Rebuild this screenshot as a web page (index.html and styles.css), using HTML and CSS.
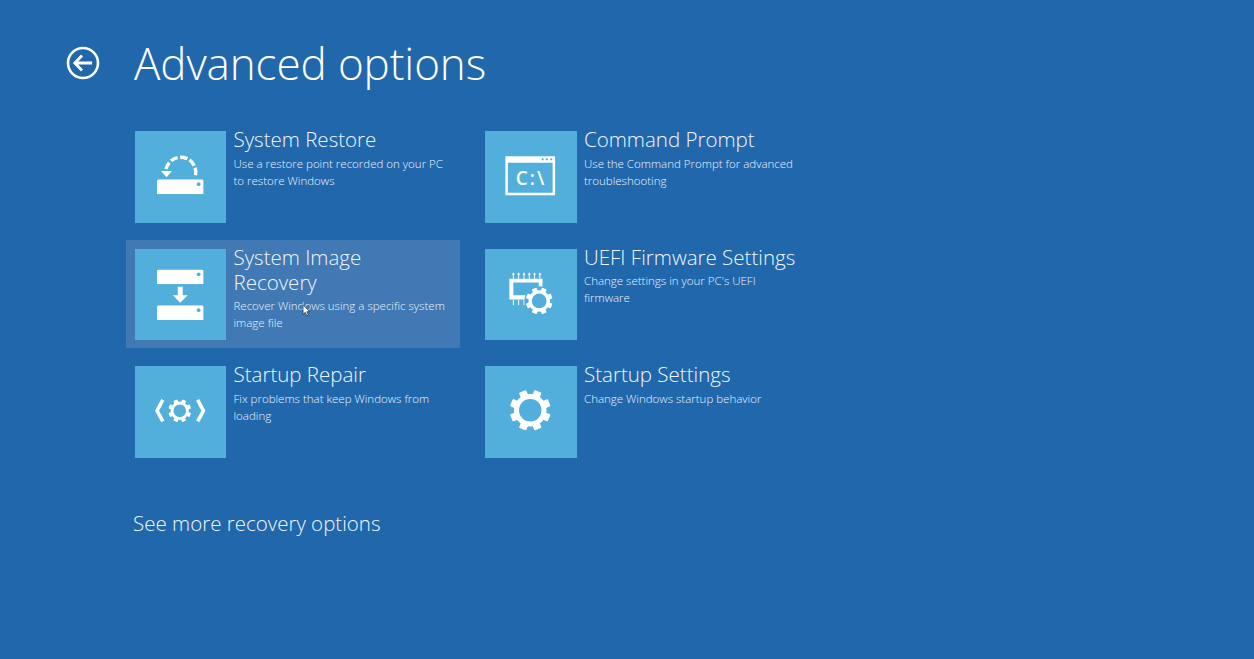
FILE: index.html
```html
<!DOCTYPE html>
<html lang="en">
<head>
  <meta charset="UTF-8"/>
  <title>Advanced options</title>
  <link rel="stylesheet" href="styles.css">
</head>
<body>

<svg class="defs" aria-hidden="true">
  <symbol id="gear" viewBox="-20 -20 40 40">
    <circle r="13.5" fill="none" stroke="#fff" stroke-width="5"/>
    <g fill="#fff">
      <rect x="-3.8" y="-20" width="7.6" height="7" rx="1" transform="rotate(22.5)"/>
      <rect x="-3.8" y="-20" width="7.6" height="7" rx="1" transform="rotate(67.5)"/>
      <rect x="-3.8" y="-20" width="7.6" height="7" rx="1" transform="rotate(112.5)"/>
      <rect x="-3.8" y="-20" width="7.6" height="7" rx="1" transform="rotate(157.5)"/>
      <rect x="-3.8" y="-20" width="7.6" height="7" rx="1" transform="rotate(202.5)"/>
      <rect x="-3.8" y="-20" width="7.6" height="7" rx="1" transform="rotate(247.5)"/>
      <rect x="-3.8" y="-20" width="7.6" height="7" rx="1" transform="rotate(292.5)"/>
      <rect x="-3.8" y="-20" width="7.6" height="7" rx="1" transform="rotate(337.5)"/>
    </g>
  </symbol>
  <symbol id="drive" viewBox="0 0 47 15">
    <path d="M0 15V2a2 2 0 0 1 2-2h43a2 2 0 0 1 2 2v13z" fill="#fff"/>
    <circle cx="42" cy="5" r="1.9" fill="#52aedb"/>
  </symbol>
</svg>

<div class="page">
  <header class="top">
    <svg class="back-icon" viewBox="0 0 34 34" aria-hidden="true">
      <circle cx="17" cy="17" r="15" fill="none" stroke="#fff" stroke-width="2.6"/>
      <path d="M26 17H9M16 9.500L8.800 17l7.200 7.500" fill="none" stroke="#fff" stroke-width="2.800"/>
    </svg>
    <h1>Advanced options</h1>
  </header>

  <div class="options">
    <div class="option">
      <div class="tile">
        <svg viewBox="0 0 92 92" aria-hidden="true">
          <path d="M60.850 44.500A15 15 0 1 0 31.200 38.500" fill="none" stroke="#fff" stroke-width="3.400" stroke-dasharray="7.500 2.400"/>
          <path d="M26.200 40.200h11l-5.500 6.300z" fill="#fff"/>
          <use href="#drive" x="22" y="48.500" width="47" height="15"/>
        </svg>
      </div>
      <div class="text">
        <div class="name">System Restore</div>
        <div class="desc">Use a restore point recorded on your PC to restore Windows</div>
      </div>
    </div>

    <div class="option is-hover">
      <div class="tile">
        <svg viewBox="0 0 92 92" aria-hidden="true">
          <use href="#drive" x="22" y="20.500" width="47" height="15"/>
          <path d="M43 38h5v8.500h5l-7.500 7.500-7.500-7.500h5z" fill="#fff"/>
          <use href="#drive" x="22" y="56.500" width="47" height="15"/>
        </svg>
      </div>
      <div class="text">
        <div class="name">System Image Recovery</div>
        <div class="desc">Recover Windows using a specific system image file</div>
      </div>
      <svg class="pointer" viewBox="0 0 10 15" aria-hidden="true">
        <path d="M1 1v11l2.600-2.400 1.800 4 1.800-.8-1.800-3.900h3.400z" fill="#fff" stroke="#222" stroke-width=".8"/>
      </svg>
    </div>

    <div class="option">
      <div class="tile">
        <svg viewBox="0 0 92 92" aria-hidden="true">
          <path d="M28 34L22.200 45 28 55.700" fill="none" stroke="#fff" stroke-width="3.600"/>
          <path d="M63 34L68.800 45 63 55.700" fill="none" stroke="#fff" stroke-width="3.600"/>
          <use href="#gear" x="33.500" y="33.500" width="23" height="23"/>
        </svg>
      </div>
      <div class="text">
        <div class="name">Startup Repair</div>
        <div class="desc">Fix problems that keep Windows from loading</div>
      </div>
    </div>

    <div class="option">
      <div class="tile">
        <svg viewBox="0 0 92 92" aria-hidden="true">
          <path d="M20.500 25.300h50v39.400h-50z M23 32v30.200h45V32z" fill="#fff" fill-rule="evenodd"/>
          <circle cx="58" cy="28.500" r="1.100" fill="#52aedb"/>
          <circle cx="62.300" cy="28.500" r="1.100" fill="#52aedb"/>
          <circle cx="66.600" cy="28.500" r="1.100" fill="#52aedb"/>
          <text class="prompt" x="31" y="54">C:\</text>
        </svg>
      </div>
      <div class="text">
        <div class="name">Command Prompt</div>
        <div class="desc">Use the Command Prompt for advanced troubleshooting</div>
      </div>
    </div>

    <div class="option">
      <div class="tile">
        <svg viewBox="0 0 92 92" aria-hidden="true">
          <path d="M24.500 29.800h33.300v21H24.500z M28.500 33.800v12.700h25.500V33.800z" fill="#fff" fill-rule="evenodd"/>
          <path d="M28.500 25v5M33.800 25v5M39.200 25v5M44.500 25v5M49.800 25v5M55.200 25v5M28.500 51v5.500M33.800 51v5.500M39.200 51v5.500" stroke="#fff" stroke-width="1"/>
          <path d="M27 26h3l-1.500-2.500zM32.300 26h3l-1.500-2.500zM37.700 26h3l-1.500-2.500zM43 26h3l-1.500-2.500zM48.300 26h3l-1.500-2.500zM53.700 26h3l-1.500-2.500z" fill="#fff"/>
          <circle cx="54.500" cy="52.200" r="14.800" fill="#52aedb"/>
          <use href="#gear" x="41" y="38.700" width="27" height="27"/>
        </svg>
      </div>
      <div class="text">
        <div class="name">UEFI Firmware Settings</div>
        <div class="desc">Change settings in your PC's UEFI firmware</div>
      </div>
    </div>

    <div class="option">
      <div class="tile">
        <svg viewBox="0 0 92 92" aria-hidden="true">
          <use href="#gear" x="25" y="24" width="41" height="41"/>
        </svg>
      </div>
      <div class="text">
        <div class="name">Startup Settings</div>
        <div class="desc">Change Windows startup behavior</div>
      </div>
    </div>
  </div>

  <div class="more">See more recovery options</div>
</div>

</body>
</html>
```

FILE: styles.css
```css
html, body {
  height: 100%;
}
body {
  margin: 0;
  background: #2167ac;
  color: #fff;
  font-family: "Open Sans", sans-serif;
  font-weight: 300;
  overflow: hidden;
}
.defs {
  display: none;
}
.page {
  padding: 31px 0 0 66px;
}
.top {
  display: flex;
  align-items: center;
  gap: 34px;
  height: 64px;
}
.back-icon {
  width: 34px;
  height: 34px;
  flex: none;
}
h1 {
  margin: 0;
  font-size: 44px;
  font-weight: 300;
  line-height: 64px;
  letter-spacing: -0.1px;
}
.options {
  display: grid;
  grid-template-columns: 334px 334px;
  grid-template-rows: repeat(3, 108px);
  grid-auto-flow: column;
  gap: 9.5px 16.5px;
  margin: 27.5px 0 0 60px;
}
.option {
  display: flex;
  gap: 7.5px;
  padding: 8.5px;
  position: relative;
}
.option.is-hover {
  background: #4079b3;
}
.tile {
  width: 91.5px;
  height: 91.5px;
  flex: none;
  background: #52aedb;
}
.tile svg {
  display: block;
  width: 91.5px;
  height: 91.5px;
}
.prompt {
  font-family: "Open Sans", sans-serif;
  font-size: 19px;
  font-weight: 600;
  letter-spacing: 2px;
  fill: #fff;
}
.text {
  max-width: 215px;
}
.name {
  margin-top: -4px;
  font-size: 20.5px;
  line-height: 25px;
  color: #f2f7fb;
}
.desc {
  margin-top: 2.5px;
  font-size: 11.5px;
  line-height: 17px;
  color: #ecf3f9;
}
.pointer {
  position: absolute;
  left: 176px;
  top: 63.5px;
  width: 9px;
  height: 13px;
}
.more {
  margin: 43.5px 0 0 67px;
  font-size: 20.5px;
  line-height: 28px;
  color: #f2f7fb;
}
```
